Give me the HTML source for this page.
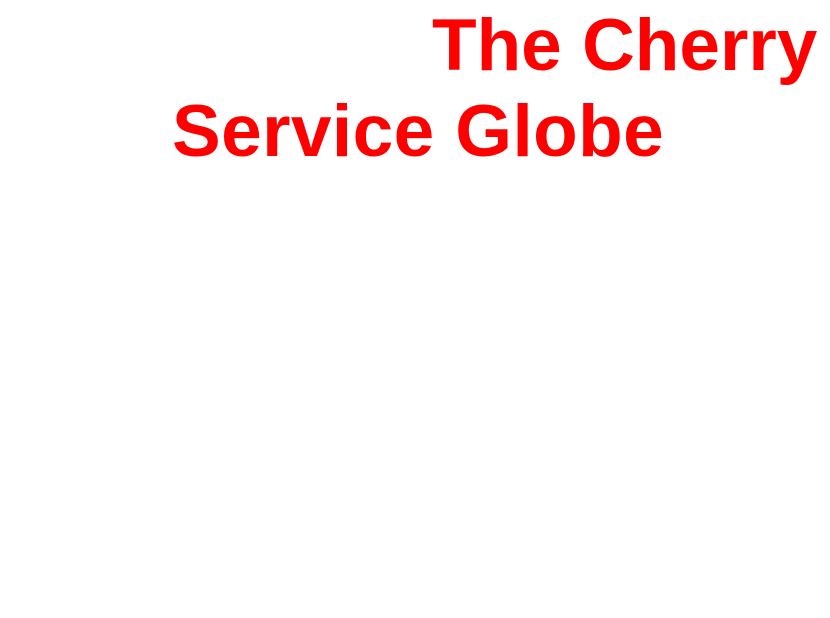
<!DOCTYPE html>
<html>
<head>
<meta charset="utf-8">
<style>
html,body{margin:0;padding:0;background:#fff;width:830px;height:618px;overflow:hidden;}
.t{position:absolute;font-family:"Liberation Sans",Arial,sans-serif;font-weight:bold;font-size:73px;line-height:73px;color:#ff0000;white-space:nowrap;}
</style>
</head>
<body>
<div class="t" style="left:432px;top:9px;">The Cherry</div>
<div class="t" style="left:172px;top:95px;letter-spacing:0.4px;">Service Globe</div>
</body>
</html>
